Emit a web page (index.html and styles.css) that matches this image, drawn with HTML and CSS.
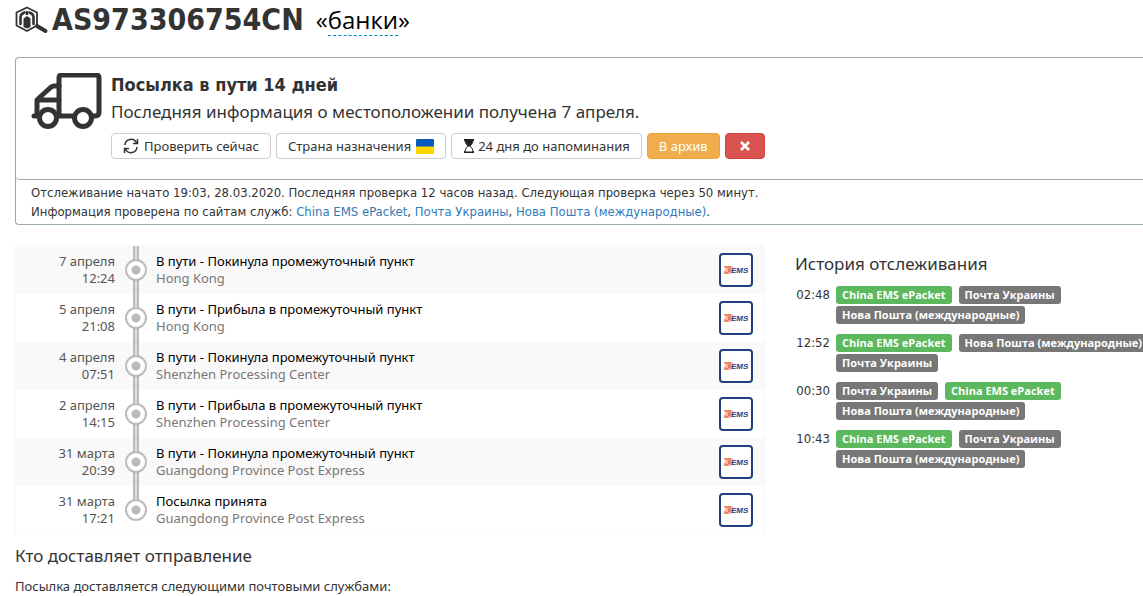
FILE: index.html
```html
<!DOCTYPE html>
<html lang="ru">
<head>
    <meta charset="UTF-8">
    <meta name="viewport" content="width=device-width, initial-scale=1.0">
    <title>AS973306754CN</title>
    <link rel="stylesheet" href="styles.css">
</head>
<body>

    <!-- icons used more than once -->
    <svg class="sprite" aria-hidden="true">
        <symbol id="ems" viewBox="0 0 36 36">
            <rect x="2" y="2" width="32" height="32" rx="3" fill="#fff" stroke="#243d7c" stroke-width="2"/>
            <path d="M6 14h9l-2 8H5l2-2H5l2-2H6l2-2z" fill="#f9b5a2"/>
            <path d="M6 15h7l-3 3h3l-4 3H6" fill="none" stroke="#e2563c" stroke-width="1"/>
            <text x="13" y="21" class="ems-text">EMS</text>
        </symbol>
    </svg>

    <main class="page">
        <header class="title">
            <svg class="logo" viewBox="0 0 34 28" aria-hidden="true">
                <path d="M12 1.500L22 6.500v13L12 25 1.500 19.500v-13z" fill="none" stroke="#333" stroke-width="1.800" stroke-linejoin="round"/>
                <path d="M5.500 18v-7q0-3 4-4.500M18.500 18v-7q0-3-4-4.500" fill="none" stroke="#333" stroke-width="2.600" stroke-linecap="round"/>
                <path d="M12 5v4" stroke="#333" stroke-width="2.400"/>
                <path d="M8.500 12.500L12 10l3.500 2.500V21L12 22.500 8.500 21z" fill="#333"/>
                <path d="M22 20l8.500 5" stroke="#333" stroke-width="4" stroke-linecap="round"/>
            </svg>
            <h1>AS973306754CN</h1>
            <span class="alias">«<a href="#">банки</a>»</span>
        </header>

        <section class="status">
            <div class="status-main">
                <svg class="truck" viewBox="0 0 72 58" aria-hidden="true">
                    <g fill="none" stroke="#333" stroke-width="5" stroke-linejoin="round" stroke-linecap="round">
                        <path d="M28 42V5q0-3 3-3h34q3 0 3 3v34q0 4-4 4h-2M42 43H28"/>
                        <path d="M28 13h-5q-2 0-4 2L8 25q-2 2-2 4v14M6 27h22M3 43h5"/>
                        <circle cx="17" cy="45" r="8.500"/>
                        <circle cx="52" cy="45" r="8.500"/>
                    </g>
                </svg>
                <div class="status-info">
                    <h2>Посылка в пути 14 дней</h2>
                    <p>Последняя информация о местоположении получена 7 апреля.</p>
                    <div class="buttons">
                        <button class="btn" type="button">
                            <svg class="icon-refresh" viewBox="0 0 16 16" aria-hidden="true">
                                <path d="M2 7a6 6 0 0 1 11.500-2M14.500 1v4.500H10M14 9a6 6 0 0 1-11.500 2M1.500 15v-4.500H6" fill="none" stroke="#333" stroke-width="1.500"/>
                            </svg>
                            Проверить сейчас
                        </button>
                        <button class="btn" type="button">
                            Страна назначения
                            <svg class="icon-flag" viewBox="0 0 18 15" aria-hidden="true">
                                <rect width="18" height="15" rx="1" fill="#ffd500"/>
                                <path d="M1 0h16l1 1v6.500H0V1z" fill="#005bbb"/>
                            </svg>
                        </button>
                        <button class="btn btn-timer" type="button">
                            <svg class="icon-timer" viewBox="0 0 12 14" aria-hidden="true">
                                <path d="M1 1h10M1 13h10" stroke="#222" stroke-width="2"/>
                                <path d="M2 1h8c0 3-2 5-3 6 1 1 3 3 3 6H2c0-3 2-5 3-6-1-1-3-3-3-6z" fill="#fff" stroke="#222"/>
                                <path d="M2 1h8c0 3-2 5-4 7C4 6 2 4 2 1z" fill="#222"/>
                            </svg>
                            24 дня до напоминания
                        </button>
                        <button class="btn btn-warning" type="button">В архив</button>
                        <button class="btn btn-danger" type="button" aria-label="Удалить">
                            <svg class="icon-close" viewBox="0 0 10 10" aria-hidden="true">
                                <path d="M1 1l8 8M9 1l-8 8" stroke="#fff" stroke-width="2.600"/>
                            </svg>
                        </button>
                    </div>
                </div>
            </div>
            <div class="status-note">
                <p>Отслеживание начато 19:03, 28.03.2020. Последняя проверка 12 часов назад. Следующая проверка через 50 минут.</p>
                <p>Информация проверена по сайтам служб: <a href="#">China EMS ePacket</a>, <a href="#">Почта Украины</a>, <a href="#">Нова Пошта (международные)</a>.</p>
            </div>
        </section>

        <div class="columns">
            <div class="main-col">
                <ol class="events">
                    <li class="event">
                        <time>7 апреля<br>12:24</time>
                        <span class="track"><i class="dot"></i></span>
                        <div class="event-text">В пути - Покинула промежуточный пункт<br><small>Hong Kong</small></div>
                        <svg class="ems"><use href="#ems"/></svg>
                    </li>
                    <li class="event">
                        <time>5 апреля<br>21:08</time>
                        <span class="track"><i class="dot"></i></span>
                        <div class="event-text">В пути - Прибыла в промежуточный пункт<br><small>Hong Kong</small></div>
                        <svg class="ems"><use href="#ems"/></svg>
                    </li>
                    <li class="event">
                        <time>4 апреля<br>07:51</time>
                        <span class="track"><i class="dot"></i></span>
                        <div class="event-text">В пути - Покинула промежуточный пункт<br><small>Shenzhen Processing Center</small></div>
                        <svg class="ems"><use href="#ems"/></svg>
                    </li>
                    <li class="event">
                        <time>2 апреля<br>14:15</time>
                        <span class="track"><i class="dot"></i></span>
                        <div class="event-text">В пути - Прибыла в промежуточный пункт<br><small>Shenzhen Processing Center</small></div>
                        <svg class="ems"><use href="#ems"/></svg>
                    </li>
                    <li class="event">
                        <time>31 марта<br>20:39</time>
                        <span class="track"><i class="dot"></i></span>
                        <div class="event-text">В пути - Покинула промежуточный пункт<br><small>Guangdong Province Post Express</small></div>
                        <svg class="ems"><use href="#ems"/></svg>
                    </li>
                    <li class="event">
                        <time>31 марта<br>17:21</time>
                        <span class="track"><i class="dot"></i></span>
                        <div class="event-text">Посылка принята<br><small>Guangdong Province Post Express</small></div>
                        <svg class="ems"><use href="#ems"/></svg>
                    </li>
                </ol>

                <h3>Кто доставляет отправление</h3>
                <p class="delivery">Посылка доставляется следующими почтовыми службами:</p>
            </div>

            <aside class="history">
                <h3>История отслеживания</h3>
                <div class="check">
                    <time>02:48</time>
                    <div class="labels">
                        <span class="label label-success">China EMS ePacket</span>
                        <span class="label">Почта Украины</span>
                        <span class="label">Нова Пошта (международные)</span>
                    </div>
                </div>
                <div class="check">
                    <time>12:52</time>
                    <div class="labels">
                        <span class="label label-success">China EMS ePacket</span>
                        <span class="label">Нова Пошта (международные)</span>
                        <span class="label">Почта Украины</span>
                    </div>
                </div>
                <div class="check">
                    <time>00:30</time>
                    <div class="labels">
                        <span class="label">Почта Украины</span>
                        <span class="label label-success">China EMS ePacket</span>
                        <span class="label">Нова Пошта (международные)</span>
                    </div>
                </div>
                <div class="check">
                    <time>10:43</time>
                    <div class="labels">
                        <span class="label label-success">China EMS ePacket</span>
                        <span class="label">Почта Украины</span>
                        <span class="label">Нова Пошта (международные)</span>
                    </div>
                </div>
            </aside>
        </div>
    </main>

</body>
</html>
```
FILE: styles.css
```css
* {
    box-sizing: border-box;
}

body {
    margin: 0;
    font-family: "Noto Sans", sans-serif;
    font-size: 13px;
    line-height: 20px;
    color: #333;
    background: #fff;
    overflow-x: hidden;
}

h1, h2, h3, p, ol {
    margin: 0;
    padding: 0;
}

a {
    color: #337ab7;
    text-decoration: none;
}

.sprite {
    display: none;
}

.page {
    padding-left: 15px;
}

/* заголовок */
.title {
    display: flex;
    align-items: center;
    height: 40px;
    margin-bottom: 17px;
}

.logo {
    width: 34px;
    height: 28px;
    margin-right: 3px;
}

.title h1 {
    font-family: Tahoma, "DejaVu Sans Condensed", sans-serif;
    font-size: 30px;
    line-height: 40px;
}

.alias {
    margin-left: 12px;
    font-family: "Open Sans", sans-serif;
    font-size: 24px;
    line-height: 32px;
    color: #000;
}

.alias a {
    display: inline-block;
    line-height: 30px;
    color: #000;
    border-bottom: 1px dashed #0088cc;
}

/* статус посылки */
.status {
    border: 1px solid #9aa9ae;
    border-right: none;
    border-radius: 4px 0 0 4px;
    margin-bottom: 20px;
}

.status-main {
    display: flex;
    gap: 8px;
    padding: 15px 15px 20px;
    border-bottom: 1px solid #9aa9ae;
    border-radius: 0 0 0 4px;
}

.truck {
    width: 72px;
    height: 58px;
    flex: none;
}

.status-info h2 {
    font-family: Tahoma, "DejaVu Sans Condensed", sans-serif;
    font-size: 18px;
    line-height: 24px;
}

.status-info p {
    font-size: 17px;
    line-height: 30px;
}

.buttons {
    display: flex;
    gap: 5px;
    margin-top: 6px;
}

.btn {
    display: flex;
    align-items: center;
    gap: 5px;
    height: 26px;
    padding: 0 11px;
    font: inherit;
    color: #333;
    white-space: nowrap;
    background: #fff;
    border: 1px solid #ccc;
    border-radius: 4px;
    cursor: pointer;
}

.btn-timer {
    gap: 3px;
}

.btn-warning {
    color: #fff;
    background: #f0ad4e;
    border-color: #eea236;
}

.btn-danger {
    padding: 0 14px;
    background: #d9534f;
    border-color: #d43f3a;
}

.icon-refresh {
    width: 16px;
    height: 16px;
}

.icon-flag {
    width: 18px;
    height: 15px;
}

.icon-timer {
    width: 12px;
    height: 14px;
}

.icon-close {
    width: 10px;
    height: 10px;
}

.status-note {
    padding: 3px 15px;
    font-family: Tahoma, "DejaVu Sans Condensed", sans-serif;
    font-size: 13px;
    line-height: 19px;
}

/* события */
.columns {
    display: grid;
    grid-template-columns: minmax(0, 750px) 1fr;
    gap: 30px;
}

.events {
    list-style: none;
    border: 1px solid #f9f9f9;
}

.event {
    display: grid;
    grid-template-columns: 99px 41px 1fr 36px;
    align-items: center;
    height: 48px;
    padding-right: 10px;
    line-height: 17px;
}

.event:nth-child(odd) {
    background: #f9f9f9;
}

.event time {
    text-align: right;
    color: #555;
}

.track {
    display: flex;
    align-items: center;
    justify-content: center;
    height: 48px;
    background: linear-gradient(90deg, #bbb 2px, #ddd 2px 4px, #bbb 4px) center / 6px 100% no-repeat;
}

.event:last-child .track {
    background-size: 6px 50%;
    background-position: top;
}

.dot {
    width: 22px;
    height: 22px;
    border: 2px solid #bbb;
    border-radius: 50%;
    background: radial-gradient(circle, #bbb 4px, #fff 5px);
}

.event-text {
    color: #000;
}

.event-text small {
    font-size: 13px;
    color: #777;
}

.ems {
    width: 36px;
    height: 36px;
}

.ems-text {
    font: italic bold 8px "Liberation Sans", sans-serif;
    fill: #243d7c;
}

h3 {
    font-size: 17px;
    font-weight: normal;
    line-height: 20px;
}

.main-col h3 {
    margin: 11px 0 10px;
}

/* история */
.history h3 {
    margin: 9px 0 11px;
}

.history {
    margin-right: -15px;
}

.check {
    display: flex;
    gap: 6px;
    margin-bottom: 9px;
}

.check time {
    width: 35px;
    text-align: right;
    font-family: Tahoma, "DejaVu Sans Condensed", sans-serif;
    font-size: 13px;
}

.labels {
    display: flex;
    flex-wrap: wrap;
    flex: 1;
    gap: 2px 7px;
    padding-top: 1px;
}

.label {
    height: 18px;
    padding: 0 6px;
    font-family: "Open Sans", sans-serif;
    font-size: 11px;
    font-weight: bold;
    line-height: 18px;
    color: #fff;
    white-space: nowrap;
    background: #777;
    border-radius: 3px;
}

.label-success {
    background: #5cb85c;
}
```
